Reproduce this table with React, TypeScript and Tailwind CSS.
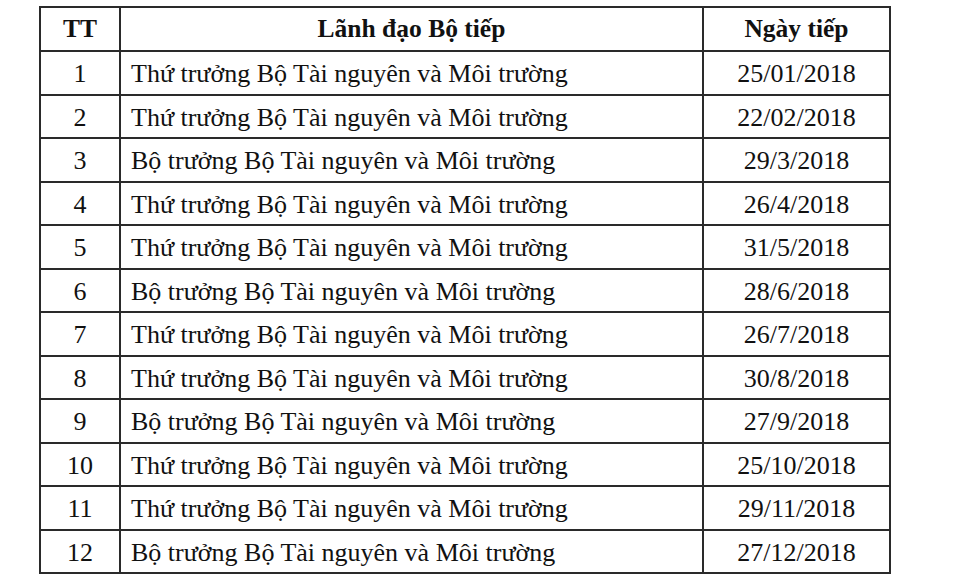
const rows = [
  ['1', 'Thứ trưởng Bộ Tài nguyên và Môi trường', '25/01/2018'],
  ['2', 'Thứ trưởng Bộ Tài nguyên và Môi trường', '22/02/2018'],
  ['3', 'Bộ trưởng Bộ Tài nguyên và Môi trường', '29/3/2018'],
  ['4', 'Thứ trưởng Bộ Tài nguyên và Môi trường', '26/4/2018'],
  ['5', 'Thứ trưởng Bộ Tài nguyên và Môi trường', '31/5/2018'],
  ['6', 'Bộ trưởng Bộ Tài nguyên và Môi trường', '28/6/2018'],
  ['7', 'Thứ trưởng Bộ Tài nguyên và Môi trường', '26/7/2018'],
  ['8', 'Thứ trưởng Bộ Tài nguyên và Môi trường', '30/8/2018'],
  ['9', 'Bộ trưởng Bộ Tài nguyên và Môi trường', '27/9/2018'],
  ['10', 'Thứ trưởng Bộ Tài nguyên và Môi trường', '25/10/2018'],
  ['11', 'Thứ trưởng Bộ Tài nguyên và Môi trường', '29/11/2018'],
  ['12', 'Bộ trưởng Bộ Tài nguyên và Môi trường', '27/12/2018'],
]

export default function App() {
  return (
    <div className="w-[960px] h-[575px] bg-white pt-[6px] pl-[39px] overflow-hidden font-['Liberation_Serif','Times_New_Roman',serif] text-[#111]">
      <table className="border-collapse table-fixed w-[850px]">
        <colgroup>
          <col className="w-[80px]" />
          <col className="w-[583px]" />
          <col className="w-[187px]" />
        </colgroup>
        <thead>
          <tr className="h-[44px]">
            <th className="border-2 border-[#2a2a2a] text-[25.5px] font-bold text-center align-middle">TT</th>
            <th className="border-2 border-[#2a2a2a] text-[25.5px] font-bold text-center align-middle">Lãnh đạo Bộ tiếp</th>
            <th className="border-2 border-[#2a2a2a] text-[25.5px] font-bold text-center align-middle">Ngày tiếp</th>
          </tr>
        </thead>
        <tbody>
          {rows.map(([tt, name, date]) => (
            <tr key={tt} className="h-[43.5px]">
              <td className="border-2 border-[#2a2a2a] text-[26px] leading-none text-center align-middle pt-[3px]">{tt}</td>
              <td className="border-2 border-[#2a2a2a] text-[26px] leading-none text-left pl-[10px] align-middle pt-[3px]">{name}</td>
              <td className="border-2 border-[#2a2a2a] text-[26px] leading-none text-center align-middle pt-[3px]">{date}</td>
            </tr>
          ))}
        </tbody>
      </table>
    </div>
  )
}
